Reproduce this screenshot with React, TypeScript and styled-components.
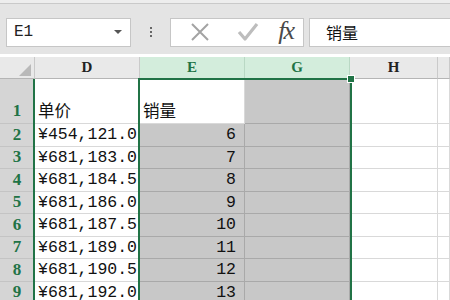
import styled, { createGlobalStyle } from "styled-components";

const GlobalStyle = createGlobalStyle`
  html, body {
    margin: 0;
    padding: 0;
    width: 450px;
    height: 300px;
    overflow: hidden;
    background: #ffffff;
  }
`;

const GREEN = "#217346";
const ROW_H = 22.5;

const prices = [
  "¥454,121.0",
  "¥681,183.0",
  "¥681,184.5",
  "¥681,186.0",
  "¥681,187.5",
  "¥681,189.0",
  "¥681,190.5",
  "¥681,192.0",
];

const App = () => {
  return (
    <Page>
      <GlobalStyle />
      <Toolbar>
        <NameBox>
          <NameText>E1</NameText>
          <Caret />
        </NameBox>
        <Dots>
          <span />
          <span />
          <span />
        </Dots>
        <FxGroup>
          <IconSlot>
            <svg width="22" height="22" viewBox="0 0 22 22">
              <path d="M3 3 L19 19 M19 3 L3 19" stroke="#a3a3a3" strokeWidth="2" fill="none" />
            </svg>
          </IconSlot>
          <IconSlot>
            <svg width="24" height="22" viewBox="0 0 24 22">
              <path d="M3 11 L9 18 L21 3" stroke="#bdbdbd" strokeWidth="3.2" fill="none" strokeLinejoin="round" />
            </svg>
          </IconSlot>
          <FxLabel>fx</FxLabel>
        </FxGroup>
        <FormulaInput>销量</FormulaInput>
      </Toolbar>

      <Sheet>
        <Corner>
          <svg width="12" height="12" viewBox="0 0 12 12">
            <path d="M12 0 L12 12 L0 12 Z" fill="#b9b9b9" />
          </svg>
        </Corner>
        <ColHead>D</ColHead>
        <ColHead $active>E</ColHead>
        <ColHead $active>G</ColHead>
        <ColHead>H</ColHead>
        <ColHead />

        <RowHead $tall>1</RowHead>
        <Cell $tall>单价</Cell>
        <Cell $tall>销量</Cell>
        <Cell $tall $shade />
        <Cell $tall />
        <Cell $tall />

        {prices.map((p, i) => (
          <Row key={p} num={i + 2} price={p} qty={i + 6} />
        ))}

        <DColumnMark />
        <Selection>
          <FillHandle />
        </Selection>
      </Sheet>
    </Page>
  );
};

const Row = ({ num, price, qty }: { num: number; price: string; qty: number }) => (
  <>
    <RowHead>{num}</RowHead>
    <Cell>{price}</Cell>
    <Cell $shade $right>
      {qty}
    </Cell>
    <Cell $shade />
    <Cell />
    <Cell />
  </>
);

const Page = styled.div`
  width: 450px;
  height: 300px;
  overflow: hidden;
  display: flex;
  flex-direction: column;
  font-family: "Liberation Mono", monospace;
`;

const Toolbar = styled.div`
  height: 54px;
  flex-shrink: 0;
  box-sizing: border-box;
  background: #e4e4e4;
  border-top: 3px solid #ededed;
  box-shadow: inset 0 1px 0 #c9c9c9;
  display: flex;
  align-items: center;
  padding: 10px 0 3px 6px;
`;

const NameBox = styled.div`
  width: 125px;
  height: 29px;
  box-sizing: border-box;
  background: #fff;
  border: 1px solid #c6c6c6;
  display: flex;
  align-items: center;
  justify-content: space-between;
  padding: 0 8px 0 7px;
`;

const NameText = styled.span`
  font-family: "Liberation Mono", monospace;
  font-size: 16px;
  color: #222;
`;

const Caret = styled.span`
  width: 0;
  height: 0;
  border-left: 4px solid transparent;
  border-right: 4px solid transparent;
  border-top: 4px solid #555;
`;

const Dots = styled.div`
  width: 39px;
  display: flex;
  flex-direction: column;
  align-items: center;
  gap: 2px;

  span {
    width: 2px;
    height: 2px;
    background: #666;
  }
`;

const FxGroup = styled.div`
  width: 134px;
  height: 29px;
  box-sizing: border-box;
  background: #fff;
  border: 1px solid #c6c6c6;
  display: flex;
  align-items: center;
  justify-content: space-between;
  padding: 0 10px 0 12px;
`;

const IconSlot = styled.span`
  display: flex;
  width: 34px;
  justify-content: center;
`;

const FxLabel = styled.span`
  font-family: "Liberation Serif", serif;
  font-style: italic;
  font-size: 26px;
  color: #4a4a4a;
  line-height: 1;
  letter-spacing: -2px;
  margin-top: -2px;
`;

const FormulaInput = styled.div`
  margin-left: 5px;
  flex: 1;
  height: 29px;
  box-sizing: border-box;
  background: #fff;
  border: 1px solid #c6c6c6;
  border-right: none;
  display: flex;
  align-items: center;
  padding-left: 16px;
  font-family: "Noto Sans CJK SC", sans-serif;
  font-size: 16px;
  color: #111;
`;

const Sheet = styled.div`
  position: relative;
  display: grid;
  grid-template-columns: 35px 105px 105px 105px 88px 1fr;
  grid-template-rows: 22px 45px repeat(8, ${ROW_H}px);
  margin-top: 3px;
`;

const Corner = styled.div`
  background: #e9e9e9;
  border-right: 1px solid #c9c9c9;
  border-bottom: 1px solid #b5b5b5;
  display: flex;
  align-items: flex-end;
  justify-content: flex-end;
  padding: 0 3px 2px 0;
`;

const ColHead = styled.div<{ $active?: boolean }>`
  background: ${(p) => (p.$active ? "#d3eddc" : "#e9e9e9")};
  color: ${(p) => (p.$active ? GREEN : "#222")};
  border-right: 1px solid ${(p) => (p.$active ? "#b9d8c4" : "#cacaca")};
  border-bottom: 1px solid ${(p) => (p.$active ? GREEN : "#b5b5b5")};
  display: flex;
  align-items: center;
  justify-content: center;
  font-family: "Liberation Serif", serif;
  font-weight: bold;
  font-size: 15px;
`;

const RowHead = styled.div<{ $tall?: boolean }>`
  background: #d5d5d5;
  color: ${GREEN};
  border-right: 1px solid #b5b5b5;
  border-bottom: 1px solid #c4c4c4;
  display: flex;
  align-items: ${(p) => (p.$tall ? "flex-end" : "center")};
  justify-content: center;
  padding-bottom: ${(p) => (p.$tall ? "2px" : "0")};
  font-family: "Liberation Serif", serif;
  font-weight: bold;
  font-size: 17px;
`;

const Cell = styled.div<{ $tall?: boolean; $shade?: boolean; $right?: boolean }>`
  background: ${(p) => (p.$shade ? "#c8c8c8" : "#fff")};
  border-right: 1px solid ${(p) => (p.$shade ? "#a9a9a9" : "#d9d9d9")};
  border-bottom: 1px solid ${(p) => (p.$shade ? "#a9a9a9" : "#d9d9d9")};
  display: flex;
  align-items: ${(p) => (p.$tall ? "flex-end" : "center")};
  justify-content: ${(p) => (p.$right ? "flex-end" : "flex-start")};
  padding: ${(p) => (p.$right ? "0 8px 0 0" : "0 0 0 3px")};
  padding-bottom: ${(p) => (p.$tall ? "1px" : "0")};
  font-family: "Liberation Mono", "Noto Sans CJK SC", monospace;
  font-size: 16.5px;
  color: #111;
  white-space: nowrap;
  overflow: hidden;
`;

const DColumnMark = styled.div`
  position: absolute;
  left: 33px;
  top: 22px;
  bottom: 0;
  width: 2px;
  background: ${GREEN};
`;

const Selection = styled.div`
  position: absolute;
  left: 138px;
  top: 21px;
  width: 214px;
  bottom: -4px;
  box-sizing: border-box;
  border: 2px solid ${GREEN};
`;

const FillHandle = styled.div`
  position: absolute;
  right: -5px;
  top: -5px;
  width: 6px;
  height: 6px;
  background: ${GREEN};
  border: 1px solid #fff;
`;

export default App;
